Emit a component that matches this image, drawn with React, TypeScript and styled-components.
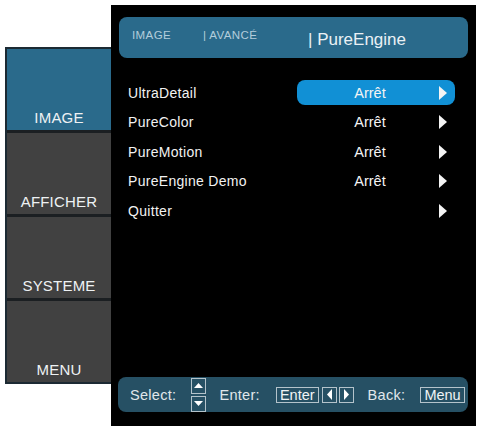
import React from 'react';
import styled, { createGlobalStyle } from 'styled-components';

const GlobalStyle = createGlobalStyle`
    html, body {
        margin: 0;
        padding: 0;
        background: #ffffff;
    }
    body {
        font-family: "Liberation Sans", Arial, sans-serif;
    }
`;

const Page = styled.div`
    width: 479px;
    height: 426px;
    display: flex;
    align-items: flex-start;
    padding: 5px 0 0 5px;
    box-sizing: border-box;
    overflow: hidden;
`;

const Sidebar = styled.div`
    margin-top: 42px;
    width: 106px;
    display: flex;
    flex-direction: column;
    gap: 3px;
    background: #1b1f22;
    border: 2px solid #1c2a33;
    border-right: none;
    box-sizing: border-box;
`;

const Tab = styled.div<{ $active?: boolean }>`
    height: 81px;
    display: flex;
    align-items: flex-end;
    justify-content: center;
    padding-bottom: 4px;
    box-sizing: border-box;
    background: ${props => (props.$active ? '#2a6a8b' : '#414141')};
    color: #eef2f4;
    font-size: 15px;
    letter-spacing: 0.2px;
`;

const Panel = styled.div`
    width: 365px;
    height: 421px;
    background: #000000;
    display: flex;
    flex-direction: column;
    padding-top: 12px;
    box-sizing: border-box;
`;

const Header = styled.div`
    margin: 0 8px;
    height: 41px;
    border-radius: 8px;
    background: #2a6a8b;
    display: flex;
    align-items: center;
    padding-left: 13px;
`;

const Crumb = styled.span<{ $width: number }>`
    width: ${props => props.$width}px;
    font-size: 11.5px;
    letter-spacing: 0.4px;
    color: #b3cddb;
    padding-bottom: 5px;
    white-space: nowrap;
`;

const Current = styled.span`
    font-size: 17px;
    color: #eaf1f5;
    padding-top: 5px;
    white-space: nowrap;
`;

const List = styled.div`
    flex: 1;
    margin-top: 20px;
    display: flex;
    flex-direction: column;
`;

const Row = styled.div`
    height: 29.5px;
    display: flex;
    align-items: center;
    padding-left: 17px;
`;

const Label = styled.span`
    width: 169px;
    font-size: 14px;
    letter-spacing: 0.3px;
    color: #f2f2f2;
`;

const ValueCell = styled.div<{ $selected?: boolean }>`
    width: 158px;
    height: 25px;
    border-radius: 8px;
    background: ${props => (props.$selected ? '#1190d5' : 'transparent')};
    display: grid;
    grid-template-columns: 1fr 8px;
    align-items: center;
    padding: 0 8px 0 4px;
    box-sizing: border-box;
`;

const Value = styled.span`
    text-align: center;
    font-size: 14.5px;
    color: #f4f4f4;
`;

const Arrow = styled.span`
    width: 0;
    height: 0;
    border-top: 7px solid transparent;
    border-bottom: 7px solid transparent;
    border-left: 8px solid #f4f4f4;
`;

const Footer = styled.div`
    margin: 0 8px 14px 7px;
    height: 35px;
    border-radius: 8px;
    background: #265064;
    display: flex;
    align-items: center;
    padding-left: 12px;
    color: #e0e7eb;
    font-size: 14.5px;
`;

const Hint = styled.span<{ $gap: number }>`
    margin-right: ${props => props.$gap}px;
    white-space: nowrap;
    letter-spacing: 0.3px;
`;

const KeyStack = styled.div`
    display: flex;
    flex-direction: column;
    gap: 2px;
    margin-right: 13px;
`;

const Key = styled.span<{ $gap?: number }>`
    height: 16px;
    min-width: 15px;
    border: 1px solid #b4c3cb;
    box-sizing: border-box;
    display: flex;
    align-items: center;
    justify-content: center;
    padding: 0 3px;
    margin-right: ${props => props.$gap ?? 0}px;
    font-size: 14.5px;
    color: #f0f4f6;
`;

const IconKey = styled(Key)`
    width: 15px;
    padding: 0;
`;

type Dir = 'up' | 'down' | 'left' | 'right';

const Tri: React.FC<{ dir: Dir }> = ({ dir }) => {
  const points: Record<Dir, string> = {
    up: '1,6 5.5,1 10,6',
    down: '1,1 5.5,6 10,1',
    left: '6,0 6,11 1,5.5',
    right: '1,0 1,11 6,5.5',
  };
  const vertical = dir === 'up' || dir === 'down';
  return (
    <svg width={vertical ? 11 : 7} height={vertical ? 7 : 11} viewBox={vertical ? '0 0 11 7' : '0 0 7 11'}>
      <polygon points={points[dir]} fill="#ffffff" />
    </svg>
  );
};

const tabs = ['IMAGE', 'AFFICHER', 'SYSTEME', 'MENU'];

const items = [
  { label: 'UltraDetail', value: 'Arrêt' },
  { label: 'PureColor', value: 'Arrêt' },
  { label: 'PureMotion', value: 'Arrêt' },
  { label: 'PureEngine Demo', value: 'Arrêt' },
  { label: 'Quitter', value: '' },
];

const App: React.FC = () => {
  return (
    <>
      <GlobalStyle />
      <Page>
        <Sidebar>
          {tabs.map((t, i) => (
            <Tab key={t} $active={i === 0}>{t}</Tab>
          ))}
        </Sidebar>
        <Panel>
          <Header>
            <Crumb $width={71}>IMAGE</Crumb>
            <Crumb $width={105}>| AVANCÉ</Crumb>
            <Current>| PureEngine</Current>
          </Header>
          <List>
            {items.map((item, i) => (
              <Row key={item.label}>
                <Label>{item.label}</Label>
                <ValueCell $selected={i === 0}>
                  <Value>{item.value}</Value>
                  <Arrow />
                </ValueCell>
              </Row>
            ))}
          </List>
          <Footer>
            <Hint $gap={15}>Select:</Hint>
            <KeyStack>
              <IconKey><Tri dir="up" /></IconKey>
              <IconKey><Tri dir="down" /></IconKey>
            </KeyStack>
            <Hint $gap={16}>Enter:</Hint>
            <Key $gap={3}>Enter</Key>
            <IconKey $gap={2}><Tri dir="left" /></IconKey>
            <IconKey $gap={14}><Tri dir="right" /></IconKey>
            <Hint $gap={15}>Back:</Hint>
            <Key>Menu</Key>
          </Footer>
        </Panel>
      </Page>
    </>
  );
};

export default App;
